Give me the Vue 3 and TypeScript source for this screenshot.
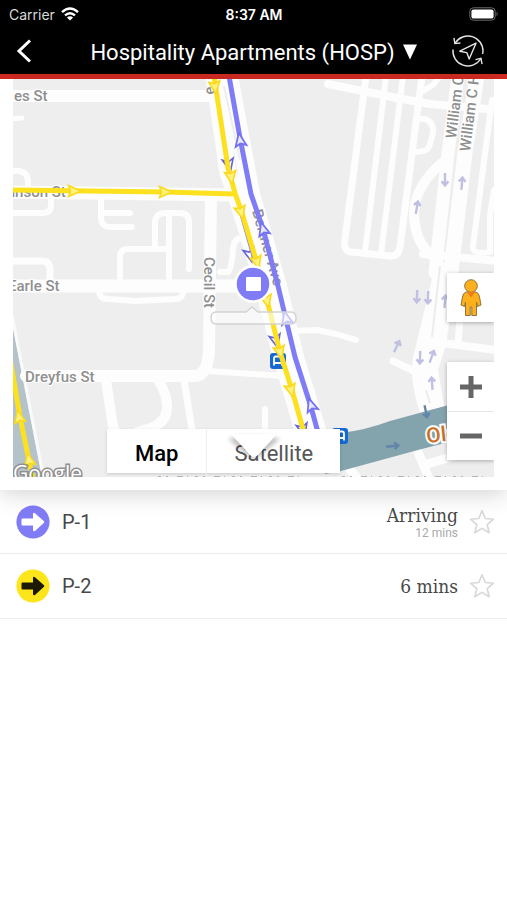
<script setup lang="ts">
import { ref } from 'vue'

interface Road { d: string; w: number }
interface Marker { x: number; y: number; a: number }
interface Arrival { id: string; color: string; arrow: string; time: string; next?: string }

const roads: Road[] = [
  { d: 'M10 96H218', w: 12 },
  { d: 'M10 119L22 118', w: 5 },
  { d: 'M10 192L236 195', w: 13 },
  { d: 'M10 171H18Q28 172 28 182V192', w: 6 },
  { d: 'M10 213H43Q51 213 51 205V195', w: 6 },
  { d: 'M101 198V219Q102 227 110 227H132', w: 6 },
  { d: 'M102 213H130', w: 6 },
  { d: 'M155 247V222Q156 213 165 213H180Q189 213 189 222V269', w: 6 },
  { d: 'M169 213V285', w: 6 },
  { d: 'M120 285V257Q120 249 128 249H168', w: 6 },
  { d: 'M10 261H42Q50 261 50 270V285', w: 7 },
  { d: 'M10 286H246', w: 13 },
  { d: 'M99 290Q99 299 108 299L135 301L175 299Q183 299 183 290', w: 6 },
  { d: 'M211 196L209 350Q208 374 196 376H26', w: 12 },
  { d: 'M208 371L284 376', w: 6 },
  { d: 'M220 272H228Q232 268 233 248Q234 238 244 237', w: 6 },
  { d: 'M106 380L112 420Q114 438 128 436L144 430Q169 424 167 404Q166 392 158 380', w: 10 },
  { d: 'M184 380L192 430', w: 7 },
  { d: 'M265 409V430', w: 6 },
  { d: 'M214 76L228 173L236 195L259 270L280 352L304 434', w: 17 },
  { d: 'M229 76L251 194L278 286L295 357L319 436', w: 18 },
  { d: 'M290 331L317 330L336 334L356 340', w: 6 },
  { d: 'M328 84L397 98L430 104L487 109', w: 8 },
  { d: 'M366 76L345 239Q343 251 351 252L390 256Q398 257 400 247L422 76', w: 7 },
  { d: 'M386 76L365 252', w: 6 },
  { d: 'M403 76L381 254', w: 6 },
  { d: 'M417 119H424Q434 121 433 133L429 147Q427 152 412 152', w: 6 },
  { d: 'M421 92L433 85L440 76', w: 6 },
  { d: 'M458 76L448 153L435 273', w: 13 },
  { d: 'M477 76L465 153L450 280', w: 15 },
  { d: 'M492 100L473 246Q472 252 480 253L490 252V215L494 190', w: 6 },
  { d: 'M423 254L496 261', w: 8 },
  { d: 'M444 161Q414 186 414 215Q415 244 434 257', w: 10 },
  { d: 'M442 343L496 350', w: 8 },
  { d: 'M460 318L458 344', w: 7 },
  { d: 'M393 361L418 373', w: 7 },
  { d: 'M418 452L428 476M424 465L458 455', w: 9 },
  { d: 'M350 470L356 476', w: 9 }
]

const yellowArrows: Marker[] = [
  { x: 215, y: 87, a: 172 }, { x: 231, y: 177, a: 170 }, { x: 241, y: 212, a: 164 },
  { x: 257, y: 262, a: 165 }, { x: 267, y: 301, a: 166 }, { x: 280, y: 352, a: 166 },
  { x: 291, y: 390, a: 165 }, { x: 74, y: 191, a: 90 }, { x: 165, y: 192, a: 90 },
  { x: 19, y: 417, a: -12 }, { x: 29, y: 460, a: -12 }
]
const blueArrows: Marker[] = [
  { x: 240, y: 140, a: -10 }, { x: 263, y: 229, a: -16 }, { x: 286, y: 318, a: -14 }, { x: 311, y: 405, a: -18 }
]
const blueBehind: Marker[] = [
  { x: 229, y: 165, a: 168 }, { x: 250, y: 255, a: 165 }, { x: 276, y: 341, a: 166 }, { x: 303, y: 430, a: 166 }
]
const oneWay: Marker[] = [
  { x: 445, y: 180, a: 180 }, { x: 462, y: 183, a: 5 }, { x: 417, y: 207, a: 10 },
  { x: 417, y: 297, a: 182 }, { x: 428, y: 298, a: 182 }, { x: 445, y: 301, a: 5 },
  { x: 397, y: 346, a: 25 }, { x: 420, y: 358, a: 182 }, { x: 432, y: 356, a: 20 }, { x: 432, y: 383, a: -5 }
]
const busStops = [{ x: 270, y: 353 }, { x: 332, y: 428 }]
const mapStyle = ref('map')
const arrivals: Arrival[] = [
  { id: 'P-1', color: '#7f7cf6', arrow: '#ffffff', time: 'Arriving', next: '12 mins' },
  { id: 'P-2', color: '#fde51b', arrow: '#1c1a05', time: '6 mins' }
]
const place = (m: Marker) => `translate(${m.x} ${m.y}) rotate(${m.a})`
</script>

<template>
  <div class="app">
    <header class="top">
      <div class="status">
        <div class="carrier">
          <span>Carrier</span>
          <svg width="18" height="14" viewBox="0 0 18 14" fill="none" stroke="#fff" stroke-width="2.4">
            <path d="M1 5.2Q9-2 17 5.2" />
            <path d="M4 8.4Q9 4 14 8.4" />
            <path d="M9 13.6L5.9 10.4Q9 8 12.1 10.4Z" fill="#fff" stroke="none" />
          </svg>
        </div>
        <span class="clock">8:37 AM</span>
        <svg class="battery" width="30" height="14" viewBox="0 0 30 14">
          <rect x="0.8" y="0.8" width="25.4" height="12.4" rx="3.6" fill="none" stroke="#6d6d6d" />
          <rect x="2.4" y="2.4" width="22.2" height="9.2" rx="2.2" fill="#fff" />
          <path d="M27.6 4.8Q29.6 7 27.6 9.2Z" fill="#777" />
        </svg>
      </div>
      <nav class="nav">
        <button class="icon-btn" type="button" aria-label="Back">
          <svg width="16" height="26" viewBox="0 0 16 26" fill="none" stroke="#fff" stroke-width="3">
            <path d="M14 2.5L3 13L14 23.5" />
          </svg>
        </button>
        <button class="title" type="button">
          <span>Hospitality Apartments (HOSP)</span>
          <svg width="14" height="16" viewBox="0 0 14 16"><path d="M0 0.5H14L7 15.5Z" fill="#fff" /></svg>
        </button>
        <button class="icon-btn refresh" type="button" aria-label="Refresh location">
          <svg width="34" height="34" viewBox="0 0 34 34" fill="none" stroke="#e4e4e4" stroke-width="1.4">
            <path d="M4.2 9.2A15 15 0 0 1 32 17.5L31.6 20" />
            <path d="M2 15.5A15 15 0 0 0 29.6 25" />
            <path d="M3 3.8L3.8 9.6L9.4 9" />
            <path d="M24.5 25.6L30 24.4L31 30.2" />
            <path d="M25 9.2L8.8 17.2L15.8 18.6L18.2 25Z" stroke-linejoin="round" />
          </svg>
        </button>
      </nav>
    </header>

    <section class="map-card">
      <div class="map">
        <svg class="canvas" viewBox="13 79 481 398" preserveAspectRatio="xMidYMid slice" role="img" aria-label="Route map">
          <rect x="-500" y="0" width="1500" height="600" fill="#eeeeee" />
          <path d="M13 328L42 477H13Z" fill="#b4c3c9" />
          <path d="M12 315L44 480" stroke="#fafafa" stroke-width="3" />
          <g fill="none" stroke="#fdfdfd" stroke-linecap="round" stroke-linejoin="round">
            <path v-for="(r, i) in roads" :key="i" :d="r.d" :stroke-width="r.w" />
          </g>
          <path d="M436 262L458 262L446 345L438 370L444 406L421 415Q409 382 413 358Z" fill="#fdfdfd" />
          <path d="M440 266L432 337M426 390L432 410" stroke="#ececec" stroke-width="2" />
          <path d="M224 86L240 160" stroke="#eeeeee" stroke-width="2" />
          <path d="M325 436L341 433Q366 430 390 421L445 406L494 397V431L445 443L418 450L341 471L325 474Z" fill="#83a4ad" />
          <path d="M428 410L420 406L439 401L444 406Z" fill="#fdfdfd" />

          <g class="street">
            <text x="14" y="101">es St</text>
            <text x="7" y="197">anson St</text>
            <text x="8" y="291">Earle St</text>
            <text x="25" y="382">Dreyfus St</text>
            <text transform="translate(204 257) rotate(90)">Cecil St</text>
            <text transform="translate(252 211) rotate(74)">Bertner Ave</text>
            <text transform="translate(456 139) rotate(-83)">William C</text>
            <text transform="translate(470 152) rotate(-83)">William C H</text>
            <text transform="translate(215 94) rotate(-98)">e</text>
          </g>

          <g fill="none" stroke="#bfc0e2" stroke-width="2.4">
            <path v-for="(m, i) in oneWay" :key="i" :transform="place(m)" d="M0 7V-5M-3.4-1.4L0-5.4L3.4-1.4" />
          </g>
          <g fill="none" stroke="#6286aa" stroke-width="2.4">
            <path transform="translate(426 412) rotate(168)" d="M0 7V-5M-3.4-1.4L0-5.4L3.4-1.4" />
            <path transform="translate(393 446) rotate(84)" d="M0 7V-5M-3.4-1.4L0-5.4L3.4-1.4" />
          </g>

          <g v-for="s in busStops" :key="s.x" :transform="`translate(${s.x} ${s.y})`">
            <rect width="16" height="16" rx="3" fill="#1668d2" />
            <path d="M4 12.5V5.5Q4 3.5 6 3.5H10Q12 3.5 12 5.5V12.5M4 10H12" fill="none" stroke="#fff" stroke-width="1.8" />
          </g>

          <g fill="#fff" stroke="#6563d8" stroke-width="1.6" fill-opacity="0.7">
            <path v-for="(m, i) in blueBehind" :key="i" :transform="place(m)" d="M0-7L5.5 6L0 3L-5.5 6Z" />
          </g>
          <path d="M242 216L254 258" stroke="#7f7cf6" stroke-width="4" />
          <path d="M229 76L240 138L251 194L263 229L278 286L295 357L311 407L319 436" fill="none" stroke="#7f7cf6" stroke-width="5" />
          <g fill="none" stroke="#fde01e" stroke-width="5">
            <path d="M214 76L228 168L235 193L242 213L257 263L267 300L280 352L292 390L305 436" />
            <path d="M10 190L165 192L235 194" />
            <path d="M10 358L20 417L33 480" />
          </g>
          <g fill="#e9e8ff" stroke="#7572f0" stroke-width="1.8">
            <path v-for="(m, i) in blueArrows" :key="i" :transform="place(m)" d="M0-7L5.5 6L0 3.5L-5.5 6Z" />
          </g>
          <g fill="#fff27e" stroke="#fbd91c" stroke-width="1.6">
            <path v-for="(m, i) in yellowArrows" :key="i" :transform="place(m)" d="M0-7L5.5 5.5L0 3.5L-5.5 5.5Z" />
          </g>

          <path d="M216 312H246L252 307L258 312H291Q296 312 296 318T291 324H216Q211 324 211 318T216 312Z" fill="#fff" fill-opacity="0.6" stroke="#d2d2d2" stroke-width="1.4" />
          <circle cx="253" cy="284" r="17.5" fill="#7f7cf6" stroke="#fff" stroke-width="2.5" />
          <rect x="246" y="277" width="15" height="14" rx="1" fill="#fff" />
          <text class="shield" transform="translate(427 443) rotate(-6)">Old</text>
          <text class="google" x="13" y="481">Google</text>
          <path d="M158 476.5H300M342 476.5H488" stroke="#b4b4b4" stroke-dasharray="3 5 2 9 6 4 1 7" />
        </svg>

        <div class="map-type">
          <button type="button" :class="{ on: mapStyle === 'map' }" @click="mapStyle = 'map'">Map</button>
          <button type="button" :class="{ on: mapStyle === 'satellite' }" @click="mapStyle = 'satellite'">Satellite</button>
        </div>
        <svg class="drawer" width="60" height="34" viewBox="0 0 60 34">
          <defs>
            <filter id="soft" x="-30%" y="-30%" width="160%" height="160%"><feGaussianBlur stdDeviation="2" /></filter>
            <linearGradient id="fade" x2="0" y2="1"><stop offset="0" stop-color="#000" stop-opacity="0.4" /><stop offset="1" stop-color="#000" stop-opacity="0.7" /></linearGradient>
          </defs>
          <path d="M4 8L14 5H46L56 8L33 26H27Z" fill="url(#fade)" opacity="0.5" filter="url(#soft)" />
          <path d="M7 3H53L34 24Q30 28 26 24Z" fill="#fff" />
        </svg>
        <button class="pegman" type="button" aria-label="Street View">
          <svg width="24" height="38" viewBox="0 0 24 38" fill="#fbb01c" stroke="#8d7445" stroke-width="1">
            <path d="M7 13H17Q20 14 20.5 18L22 26L18.5 27.5L17.5 23V36.5H12.8V28H11.2V36.5H6.5V23L5.5 27.5L2 26L3.5 18Q4 14 7 13Z" />
            <circle cx="12" cy="7" r="6.3" />
            <path d="M8 13H16L12 18.5Z" fill="#f07a1c" stroke="none" />
          </svg>
        </button>
        <div class="zoom">
          <button type="button" aria-label="Zoom in">
            <svg width="22" height="22" viewBox="0 0 22 22"><path d="M0 11H22M11 0V22" stroke="#666" stroke-width="5" /></svg>
          </button>
          <button type="button" aria-label="Zoom out">
            <svg width="22" height="22" viewBox="0 0 22 22"><path d="M0 11H22" stroke="#666" stroke-width="5" /></svg>
          </button>
        </div>
      </div>
    </section>

    <ul class="list">
      <li v-for="a in arrivals" :key="a.id" class="row">
        <svg class="badge" width="34" height="34" viewBox="0 0 34 34">
          <circle cx="17" cy="17" r="16.6" :fill="a.color" />
          <path d="M6.5 13.5H17V8.5Q17.5 7.2 19 8.2L28 16.2Q28.6 17 28 17.8L19 26Q17.5 26.8 17 25.5V20.5H6.5Q5.5 20.5 5.5 19.5V14.5Q5.5 13.5 6.5 13.5Z" :fill="a.arrow" />
        </svg>
        <span class="name">{{ a.id }}</span>
        <div class="times">
          <span class="time">{{ a.time }}</span>
          <span v-if="a.next" class="next">{{ a.next }}</span>
        </div>
        <button class="star" type="button" :aria-label="`Add ${a.id} to favorites`">
          <svg width="26" height="26" viewBox="0 0 26 26" fill="none" stroke="#d8d8d8" stroke-width="1.6" stroke-linejoin="round">
            <path d="M13 1.8L16.2 9.5L24.5 10.2L18.2 15.6L20.2 23.8L13 19.4L5.8 23.8L7.8 15.6L1.5 10.2L9.8 9.5Z" />
          </svg>
        </button>
      </li>
    </ul>
  </div>
</template>

<style>
body {
  background: #fff;
}
</style>

<style scoped>
.app {
  font-family: Roboto, "Liberation Sans", sans-serif;
  color: #484848;
}
button {
  display: flex;
  align-items: center;
  justify-content: center;
  margin: 0;
  padding: 0;
  border: 0;
  background: none;
  font: inherit;
  color: inherit;
  cursor: pointer;
}
svg {
  display: block;
}
.top {
  background: #000;
  color: #fff;
  border-bottom: 5px solid #d92c22;
}
.status,
.nav {
  display: grid;
  grid-template-columns: 1fr auto 1fr;
  align-items: center;
}
.status {
  height: 28px;
  padding: 0 8px 0 9px;
  font-family: Inter, sans-serif;
  font-size: 14px;
}
.carrier {
  display: flex;
  align-items: center;
  gap: 6px;
  color: #d8d8d8;
}
.clock {
  font-weight: 600;
}
.battery {
  justify-self: end;
}
.nav {
  height: 46px;
  padding: 0 22px 0 16px;
}
.icon-btn {
  justify-self: start;
}
.refresh {
  justify-self: end;
}
.title {
  gap: 8px;
  padding: 2px 0 0 6px;
  font-size: 22px;
  white-space: nowrap;
}
.map-card {
  position: relative;
  padding: 0 13px 13px;
  background: #fff;
  box-shadow: 0 2px 24px rgba(0, 0, 0, 0.2);
}
.map {
  position: relative;
  overflow: hidden;
}
.canvas {
  width: 100%;
  height: 398px;
}
.street {
  font-size: 15px;
  font-weight: 500;
  fill: #8f8f8f;
  stroke: #fff;
  stroke-width: 2px;
  paint-order: stroke;
}
.shield {
  font-size: 21px;
  font-weight: 500;
  fill: #c9702a;
  stroke: #fff;
  stroke-width: 4px;
  paint-order: stroke;
}
.google {
  font-family: "Open Sans", sans-serif;
  font-size: 21px;
  fill: #fff;
  stroke: #8f8f8f;
  stroke-width: 3px;
  paint-order: stroke;
}
.map-type {
  position: absolute;
  left: 94px;
  bottom: 4px;
  display: flex;
  height: 44px;
  background: #fff;
  box-shadow: 0 1px 3px rgba(0, 0, 0, 0.15);
  font-size: 22px;
  color: #565656;
}
.map-type button {
  padding: 0 28px;
  height: 48px;
}
.map-type button + button {
  padding: 0 27px;
  border-left: 1px solid #eee;
}
.map-type .on {
  color: #000;
  font-weight: 500;
}
.drawer {
  position: absolute;
  left: 50%;
  bottom: 12px;
  margin-left: -30px;
}
.pegman,
.zoom {
  position: absolute;
  right: 0;
  width: 47px;
  background: #fff;
  box-shadow: 0 1px 4px rgba(0, 0, 0, 0.3);
}
.pegman {
  bottom: 155px;
  height: 49px;
}
.zoom {
  bottom: 17px;
}
.zoom button {
  width: 100%;
  height: 49px;
}
.zoom button + button {
  border-top: 1px solid #e6e6e6;
}
.list {
  margin: 0;
  padding: 0;
  list-style: none;
}
.row {
  display: flex;
  align-items: center;
  box-sizing: border-box;
  height: 64px;
  padding: 0 12px 0 16px;
  border-bottom: 1px solid #ececec;
}
.row + .row {
  height: 65px;
}
.name {
  margin-left: 12px;
  font-size: 20px;
}
.times {
  display: flex;
  flex-direction: column;
  align-items: flex-end;
  margin-left: auto;
}
.time {
  font-family: "DejaVu Serif Condensed", "DejaVu Serif", serif;
  font-size: 19px;
  line-height: 22px;
}
.next {
  font-size: 12px;
  line-height: 14px;
  color: #aaa;
}
.star {
  margin-left: 11px;
}
</style>
